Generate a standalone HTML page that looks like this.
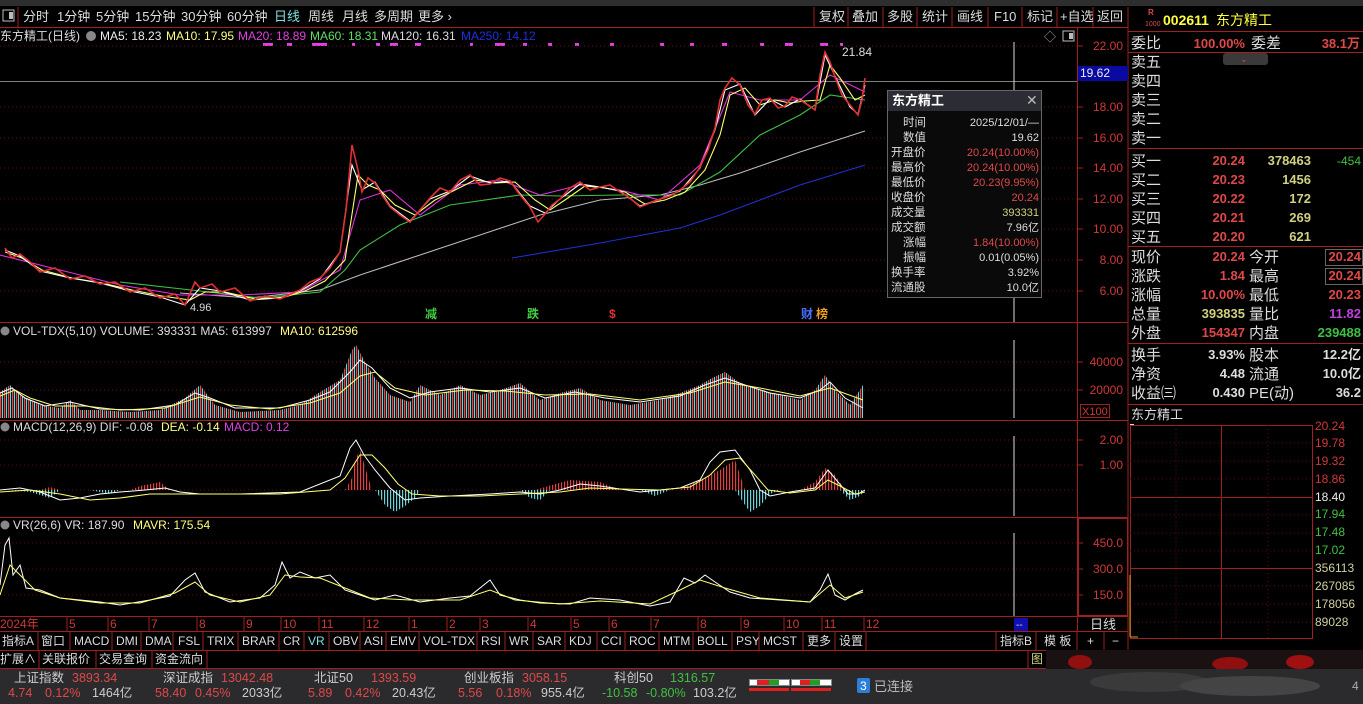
<!DOCTYPE html>
<html><head><meta charset="utf-8"><style>
html,body{margin:0;padding:0;background:#000;width:1363px;height:704px;overflow:hidden}
svg{display:block}
text{font-family:"Liberation Sans","Noto Sans CJK SC",sans-serif}
</style></head><body>
<svg width="1363" height="704" viewBox="0 0 1363 704" xmlns="http://www.w3.org/2000/svg">
<defs>
<pattern id="vb" width="4" height="10" patternUnits="userSpaceOnUse"><rect x="0" y="0" width="1.3" height="10" fill="#e04848"/><rect x="2" y="0" width="1.1" height="10" fill="#6cd2d8"/></pattern>
<pattern id="mr" width="3" height="10" patternUnits="userSpaceOnUse"><rect x="0" y="0" width="1.2" height="10" fill="#e04040"/></pattern>
<pattern id="mc" width="3" height="10" patternUnits="userSpaceOnUse"><rect x="0" y="0" width="1.2" height="10" fill="#6cd2d8"/></pattern>
</defs>
<rect width="1363" height="704" fill="#000"/>
<rect x="0" y="0" width="1363" height="6" fill="#2e2e2e"/>
<g font-size="13" fill="#ddd">
<rect x="3" y="10" width="11" height="11" fill="none" stroke="#bbb"/><rect x="9" y="12" width="4" height="7" fill="#bbb"/>
<line x1="18" y1="7" x2="18" y2="27" stroke="#a02020"/>
<text x="23" y="21">分时</text><text x="57" y="21">1分钟</text><text x="96" y="21">5分钟</text><text x="135" y="21">15分钟</text><text x="181" y="21">30分钟</text><text x="227" y="21">60分钟</text>
<text x="274" y="21" fill="#7fe0e0">日线</text><text x="308" y="21">周线</text><text x="342" y="21">月线</text><text x="374" y="21">多周期</text><text x="418" y="21">更多 ›</text>
<g stroke="#a02020"><line x1="814" y1="7" x2="814" y2="27"/><line x1="848" y1="7" x2="848" y2="27"/><line x1="883" y1="7" x2="883" y2="27"/><line x1="917" y1="7" x2="917" y2="27"/><line x1="952" y1="7" x2="952" y2="27"/><line x1="988" y1="7" x2="988" y2="27"/><line x1="1022" y1="7" x2="1022" y2="27"/><line x1="1057" y1="7" x2="1057" y2="27"/><line x1="1093" y1="7" x2="1093" y2="27"/><line x1="1128" y1="7" x2="1128" y2="704"/></g>
<text x="819" y="21">复权</text><text x="852" y="21">叠加</text><text x="887" y="21">多股</text><text x="922" y="21">统计</text><text x="957" y="21">画线</text><text x="994" y="21">F10</text><text x="1027" y="21">标记</text><text x="1060" y="21">+自选</text><text x="1097" y="21">返回</text>
</g>
<line x1="0" y1="27.5" x2="1128" y2="27.5" stroke="#a02020"/>
<g font-size="12">
<text x="0" y="40" fill="#ddd">东方精工(日线)</text>
<circle cx="91" cy="36" r="5" fill="#888"/>
<text x="100" y="40" fill="#eee">MA5: 18.23</text><text x="166" y="40" fill="#ffff80">MA10: 17.95</text><text x="238" y="40" fill="#e040e0">MA20: 18.89</text><text x="310" y="40" fill="#60e060">MA60: 18.31</text><text x="381" y="40" fill="#ddd">MA120: 16.31</text><text x="461" y="40" fill="#2030e0">MA250: 14.12</text>
</g>
<g fill="#e040e0"><rect x="263" y="43" width="10" height="3"/><rect x="287" y="43" width="5" height="3"/><rect x="312" y="43" width="15" height="3"/><rect x="352" y="43" width="3" height="3"/><rect x="376" y="43" width="4" height="3"/><rect x="390" y="43" width="8" height="3"/><rect x="415" y="43" width="6" height="3"/><rect x="470" y="43" width="3" height="3"/><rect x="495" y="43" width="10" height="3"/><rect x="523" y="43" width="4" height="3"/><rect x="548" y="43" width="4" height="3"/><rect x="575" y="43" width="4" height="3"/><rect x="610" y="43" width="4" height="3"/><rect x="660" y="43" width="4" height="3"/><rect x="690" y="43" width="4" height="3"/><rect x="722" y="43" width="5" height="3"/><rect x="760" y="43" width="4" height="3"/><rect x="785" y="43" width="8" height="3"/><rect x="820" y="43" width="8" height="3"/><rect x="840" y="43" width="3" height="3"/></g>
<text x="1044" y="41" font-size="12" fill="#aaa">◇</text>
<rect x="1063" y="31" width="11" height="10" fill="none" stroke="#bbb"/><rect x="1069" y="33" width="4" height="6" fill="#bbb"/>
<g stroke="#5a1010" stroke-dasharray="1,3">
<line x1="0" y1="46" x2="1077" y2="46"/><line x1="0" y1="107" x2="1077" y2="107"/><line x1="0" y1="138" x2="1077" y2="138"/><line x1="0" y1="168" x2="1077" y2="168"/><line x1="0" y1="199" x2="1077" y2="199"/><line x1="0" y1="229" x2="1077" y2="229"/><line x1="0" y1="260" x2="1077" y2="260"/><line x1="0" y1="291" x2="1077" y2="291"/>
<line x1="0" y1="362" x2="1077" y2="362"/><line x1="0" y1="390" x2="1077" y2="390"/>
<line x1="0" y1="440" x2="1077" y2="440"/><line x1="0" y1="465" x2="1077" y2="465"/><line x1="0" y1="490" x2="1077" y2="490"/>
<line x1="0" y1="543" x2="1077" y2="543"/><line x1="0" y1="569" x2="1077" y2="569"/><line x1="0" y1="595" x2="1077" y2="595"/>
</g>
<line x1="0" y1="81.5" x2="1077" y2="81.5" stroke="#aaa" stroke-width="0.8"/>
<line x1="1014" y1="42" x2="1014" y2="322" stroke="#ddd"/>
<line x1="1014" y1="340" x2="1014" y2="418" stroke="#ddd"/>
<line x1="1014" y1="436" x2="1014" y2="516" stroke="#ddd"/>
<line x1="1014" y1="533" x2="1014" y2="616" stroke="#ddd"/>
<g fill="none" stroke-width="1.1">
<polyline stroke="#2030d0" points="512,258 600,243 680,228 720,215 760,200 800,185 865,165"/>
<polyline stroke="#bbb" points="180,293 250,298 320,290 360,275 420,255 480,235 540,215 600,200 660,195 700,185 740,173 800,152 865,131"/>
<polyline stroke="#40c040" points="120,282 200,291 260,298 320,292 345,270 360,250 400,225 450,205 520,195 560,196 620,195 680,195 720,172 760,135 800,115 830,95 865,100"/>
<polyline stroke="#e030e0" points="0,255 60,270 120,285 180,295 240,295 300,292 340,270 360,200 390,190 420,215 460,185 500,180 540,195 580,185 620,190 660,200 700,165 730,92 760,100 800,100 830,75 865,92"/>
<polyline stroke="#ffff70" points="5,252 22,258 42,270 72,278 102,283 132,290 162,296 190,300 205,292 225,292 255,299 285,297 305,291 325,281 345,260 358,175 368,185 380,190 395,205 415,215 435,200 455,190 475,180 495,183 515,182 535,200 550,210 565,200 585,186 605,188 625,192 645,204 665,200 685,192 705,170 720,135 730,95 745,88 760,105 775,100 790,103 805,101 820,100 830,65 840,78 855,100 865,95"/>
<polyline stroke="#fff" points="5,250 20,256 40,271 70,278 100,283 130,291 160,297 185,305 200,288 220,291 250,300 280,298 300,291 320,279 340,252 352,165 362,190 375,182 390,206 410,221 430,199 450,191 470,176 490,183 510,181 530,206 545,213 560,199 580,184 600,187 620,191 640,206 660,199 680,191 700,168 715,130 725,90 740,84 755,115 770,99 785,107 800,99 815,110 825,55 835,76 850,107 858,114 865,85"/>
<polyline stroke="#e03030" stroke-width="1.6" points="5,248 12,258 20,254 30,262 40,272 55,268 70,279 85,276 100,284 115,282 130,292 145,288 160,298 175,294 185,305 195,282 200,288 212,284 220,292 235,288 250,301 265,296 280,299 295,292 300,290 310,282 320,278 330,268 340,252 346,210 352,145 358,170 362,192 368,178 375,183 382,195 390,207 400,215 410,222 420,210 430,198 440,188 450,192 460,180 470,175 480,185 490,184 500,178 510,181 520,195 530,207 538,222 545,214 552,205 560,199 570,188 580,182 590,190 600,187 610,185 620,192 630,198 640,207 650,203 660,199 670,196 680,190 690,182 700,167 708,150 715,128 720,100 725,88 732,78 740,85 748,105 755,114 762,100 770,98 778,108 785,106 792,97 800,100 808,105 815,110 820,75 825,52 830,62 835,77 842,95 850,105 858,115 862,100 865,78"/>
</g>
<text x="190" y="311" font-size="11" fill="#ddd">4.96</text>
<text x="842" y="56" font-size="12" fill="#ddd">21.84</text>
<g font-size="12" font-weight="bold"><text x="425" y="318" fill="#40d040">减</text><text x="527" y="318" fill="#40d040">跌</text><text x="609" y="318" fill="#e03030">$</text><text x="801" y="318" fill="#4a70ff">财</text><text x="816" y="318" fill="#f0a020">榜</text></g>
<rect x="887.5" y="90.5" width="154" height="207" fill="#0a0a0a" stroke="#666"/>
<rect x="888" y="91" width="153" height="20" fill="#2c2c34"/>
<text x="892" y="105" font-size="13" font-weight="bold" fill="#fff">东方精工</text>
<text x="1026" y="105" font-size="14" fill="#bbb">✕</text>
<g font-size="11.5" fill="#ddd">
<text x="903" y="126">时间</text><text x="903" y="141">数值</text><text x="891" y="156">开盘价</text><text x="891" y="171">最高价</text><text x="891" y="186">最低价</text><text x="891" y="201">收盘价</text><text x="891" y="216">成交量</text><text x="891" y="231">成交额</text><text x="903" y="246">涨幅</text><text x="903" y="261">振幅</text><text x="891" y="276">换手率</text><text x="891" y="291">流通股</text>
</g>
<g font-size="11" text-anchor="end" font-family="Liberation Mono,monospace">
<text x="1039" y="126" fill="#ddd">2025/12/01/—</text><text x="1039" y="141" fill="#ddd">19.62</text><text x="1039" y="156" fill="#e04848">20.24(10.00%)</text><text x="1039" y="171" fill="#e04848">20.24(10.00%)</text><text x="1039" y="186" fill="#e04848">20.23(9.95%)</text><text x="1039" y="201" fill="#e04848">20.24</text><text x="1039" y="216" fill="#d0d080">393331</text><text x="1039" y="231" fill="#ddd">7.96亿</text><text x="1039" y="246" fill="#e04848">1.84(10.00%)</text><text x="1039" y="261" fill="#ddd">0.01(0.05%)</text><text x="1039" y="276" fill="#ddd">3.92%</text><text x="1039" y="291" fill="#ddd">10.0亿</text>
</g>
<g stroke="#a02020"><line x1="0" y1="322.5" x2="1128" y2="322.5"/><line x1="0" y1="420.5" x2="1128" y2="420.5"/><line x1="0" y1="517.5" x2="1128" y2="517.5"/><line x1="0" y1="616.5" x2="1128" y2="616.5"/><line x1="1077.5" y1="28" x2="1077.5" y2="632"/></g>
<g font-size="12" fill="#d03838" text-anchor="end">
<text x="1123" y="50">22.00</text><text x="1123" y="111">18.00</text><text x="1123" y="142">16.00</text><text x="1123" y="172">14.00</text><text x="1123" y="203">12.00</text><text x="1123" y="233">10.00</text><text x="1123" y="264">8.00</text><text x="1123" y="295">6.00</text>
<text x="1123" y="366">40000</text><text x="1123" y="394">20000</text>
<text x="1123" y="444">2.00</text><text x="1123" y="469">1.00</text>
<text x="1123" y="547">450.0</text><text x="1123" y="573">300.0</text><text x="1123" y="599">150.0</text>
</g>
<g stroke="#a02020"><line x1="1077" y1="46" x2="1083" y2="46"/><line x1="1077" y1="107" x2="1083" y2="107"/><line x1="1077" y1="138" x2="1083" y2="138"/><line x1="1077" y1="168" x2="1083" y2="168"/><line x1="1077" y1="199" x2="1083" y2="199"/><line x1="1077" y1="229" x2="1083" y2="229"/><line x1="1077" y1="260" x2="1083" y2="260"/><line x1="1077" y1="291" x2="1083" y2="291"/><line x1="1077" y1="362" x2="1083" y2="362"/><line x1="1077" y1="390" x2="1083" y2="390"/><line x1="1077" y1="440" x2="1083" y2="440"/><line x1="1077" y1="465" x2="1083" y2="465"/><line x1="1077" y1="543" x2="1083" y2="543"/><line x1="1077" y1="569" x2="1083" y2="569"/><line x1="1077" y1="595" x2="1083" y2="595"/></g>
<rect x="1078" y="66" width="50" height="15" fill="#0a0aa0"/><text x="1080" y="77" font-size="12" fill="#eee">19.62</text>
<rect x="1080.5" y="404.5" width="29" height="13" fill="none" stroke="#a02020"/><text x="1082" y="415" font-size="11" fill="#d03838">X100</text>
<rect x="1078.5" y="518.5" width="49" height="97" fill="none" stroke="#a02020"/>
<g font-size="12"><circle cx="5" cy="331" r="4.5" fill="#888"/><text x="13" y="335" fill="#ddd">VOL-TDX(5,10) VOLUME: 393331  MA5: 613997</text><text x="280" y="335" fill="#ffff80">MA10: 612596</text></g>
<polygon fill="url(#vb)" points="0,418 0,392 10,385 20,395 40,405 60,408 70,400 80,410 100,410 130,412 160,410 185,398 200,385 215,405 240,412 280,410 300,405 320,392 340,380 352,350 356,345 365,362 375,378 390,395 410,402 420,385 440,395 460,385 480,395 500,390 520,383 540,400 560,393 580,388 600,400 630,405 660,400 680,393 700,385 712,378 725,372 740,383 760,390 780,395 800,400 815,390 825,375 835,390 850,405 863,385 863,418"/>
<g fill="none" stroke-width="1">
<polyline stroke="#fff" points="0,393 12,388 25,398 45,406 70,402 100,409 140,410 175,405 195,393 210,398 235,408 280,408 310,400 330,392 350,372 360,360 372,368 390,388 410,398 430,392 460,388 490,392 520,388 545,398 575,392 605,398 640,402 680,396 705,385 725,378 745,385 770,393 800,398 820,390 830,382 845,398 863,408"/>
<polyline stroke="#ffff70" points="0,396 15,390 30,398 55,406 85,406 120,410 165,408 200,397 230,405 270,409 310,403 340,393 360,376 375,372 395,388 425,395 465,390 505,391 545,395 590,394 640,400 690,393 725,382 760,388 800,396 830,388 863,400"/>
</g>
<g font-size="12"><circle cx="5" cy="427" r="4.5" fill="#888"/><text x="13" y="431" fill="#ddd">MACD(12,26,9)  DIF: -0.08</text><text x="161" y="431" fill="#ffff80">DEA: -0.14</text><text x="224" y="431" fill="#e040e0">MACD: 0.12</text></g>
<polygon fill="url(#mr)" points="40,490 50,487 60,490 130,490 140,486 160,482 170,490 230,490 345,490 352,478 355,460 360,450 366,470 372,490 535,490 555,484 570,480 600,482 620,490 680,490 700,480 720,470 735,460 745,490 800,490 815,482 825,468 835,475 845,490"/>
<polygon fill="url(#mc)" points="10,490 30,492 50,498 60,490 90,490 110,494 120,490 375,490 385,505 395,512 405,506 415,498 420,490 520,490 530,498 540,500 550,490 640,490 655,496 670,490 735,490 745,505 750,512 760,506 770,494 780,490 840,490 850,500 860,496 865,490"/>
<g fill="none">
<polyline stroke="#fff" points="0,490 20,488 40,492 60,500 80,498 100,494 120,492 145,490 165,488 180,492 200,494 240,494 300,492 340,476 350,448 356,440 364,455 375,470 390,488 405,500 420,498 450,496 490,494 520,492 540,494 560,490 580,484 600,486 640,492 680,488 700,480 710,462 720,452 735,450 750,470 760,490 770,496 790,492 815,488 828,470 838,482 848,494 858,494 865,490"/>
<polyline stroke="#ffff70" points="0,492 30,490 60,494 90,500 120,498 150,494 180,494 220,494 280,494 330,490 345,478 360,455 372,455 385,468 398,484 412,494 440,496 480,496 520,494 560,492 590,488 620,489 660,490 690,487 710,475 725,460 740,458 755,475 768,490 790,493 815,490 828,480 840,486 855,494 865,492"/>
</g>
<g font-size="12"><circle cx="5" cy="525" r="4.5" fill="#888"/><text x="13" y="529" fill="#ddd">VR(26,6)  VR: 187.90</text><text x="133" y="529" fill="#ffff80">MAVR: 175.54</text></g>
<g fill="none">
<polyline stroke="#fff" points="0,585 5,545 9,538 13,575 20,565 26,588 40,590 60,598 80,600 100,602 120,605 150,600 170,596 185,580 195,573 205,592 230,602 260,598 275,585 282,562 290,578 300,572 315,578 330,575 345,590 360,595 375,600 395,595 420,602 450,598 470,596 490,580 500,595 520,600 540,603 570,604 590,598 620,600 650,606 670,602 684,578 695,583 705,575 715,582 730,592 750,598 780,600 810,602 820,590 828,574 835,595 845,600 855,594 863,590"/>
<polyline stroke="#ffff70" points="0,595 10,565 20,575 35,590 60,598 100,603 140,603 175,593 195,582 210,595 240,602 270,595 285,575 300,577 320,578 345,588 370,598 410,600 460,600 490,590 515,600 560,604 600,601 650,604 680,590 700,580 725,588 760,598 810,602 830,585 845,598 863,592"/>
</g>
<g font-size="12" fill="#d03838">
<text x="0" y="628">2024年</text>
<text x="69" y="628">5</text><text x="110" y="628">6</text><text x="151" y="628">7</text><text x="199" y="628">8</text><text x="246" y="628">9</text><text x="283" y="628">10</text><text x="321" y="628">11</text><text x="366" y="628">12</text><text x="411" y="628">1</text><text x="449" y="628">2</text><text x="482" y="628">3</text><text x="530" y="628">4</text><text x="573" y="628">5</text><text x="611" y="628">6</text><text x="653" y="628">7</text><text x="700" y="628">8</text><text x="743" y="628">9</text><text x="786" y="628">10</text><text x="824" y="628">11</text><text x="866" y="628">12</text>
</g>
<g stroke="#a02020"><line x1="67" y1="617" x2="67" y2="631"/><line x1="108" y1="617" x2="108" y2="631"/><line x1="149" y1="617" x2="149" y2="631"/><line x1="197" y1="617" x2="197" y2="631"/><line x1="244" y1="617" x2="244" y2="631"/><line x1="281" y1="617" x2="281" y2="631"/><line x1="319" y1="617" x2="319" y2="631"/><line x1="364" y1="617" x2="364" y2="631"/><line x1="409" y1="617" x2="409" y2="631"/><line x1="447" y1="617" x2="447" y2="631"/><line x1="480" y1="617" x2="480" y2="631"/><line x1="528" y1="617" x2="528" y2="631"/><line x1="571" y1="617" x2="571" y2="631"/><line x1="609" y1="617" x2="609" y2="631"/><line x1="651" y1="617" x2="651" y2="631"/><line x1="698" y1="617" x2="698" y2="631"/><line x1="741" y1="617" x2="741" y2="631"/><line x1="784" y1="617" x2="784" y2="631"/><line x1="822" y1="617" x2="822" y2="631"/><line x1="864" y1="617" x2="864" y2="631"/></g>
<rect x="1014" y="618" width="14" height="13" fill="#1010b0"/><text x="1016" y="628" font-size="10" fill="#ddd">--</text>
<text x="1090" y="629" font-size="13" fill="#ddd">日线</text>
<line x1="0" y1="631.5" x2="1128" y2="631.5" stroke="#a02020"/>
<line x1="0" y1="650.5" x2="1128" y2="650.5" stroke="#a02020"/>
<line x1="0" y1="668.5" x2="1128" y2="668.5" stroke="#a02020"/>
<g font-size="12" fill="#ddd">
<text x="2" y="645">指标A</text><text x="41" y="645">窗口</text><text x="74" y="645">MACD</text><text x="116" y="645">DMI</text><text x="145" y="645">DMA</text><text x="178" y="645">FSL</text><text x="207" y="645">TRIX</text><text x="242" y="645">BRAR</text><text x="283" y="645">CR</text><text x="308" y="645" fill="#7fe0e0">VR</text><text x="333" y="645">OBV</text><text x="364" y="645">ASI</text><text x="390" y="645">EMV</text><text x="423" y="645">VOL-TDX</text><text x="481" y="645">RSI</text><text x="509" y="645">WR</text><text x="537" y="645">SAR</text><text x="569" y="645">KDJ</text><text x="601" y="645">CCI</text><text x="629" y="645">ROC</text><text x="663" y="645">MTM</text><text x="697" y="645">BOLL</text><text x="736" y="645">PSY</text><text x="763" y="645">MCST</text><text x="807" y="645">更多</text><text x="839" y="645">设置</text>
<text x="1000" y="645">指标B</text><text x="1044" y="645">模 板</text><text x="1087" y="645">+</text><text x="1112" y="645">−</text>
<text x="0" y="663">扩展∧</text><text x="42" y="663">关联报价</text><text x="99" y="663">交易查询</text><text x="155" y="663">资金流向</text>
</g>
<g stroke="#a02020"><line x1="38" y1="631" x2="38" y2="650"/><line x1="70" y1="631" x2="70" y2="650"/><line x1="112" y1="631" x2="112" y2="650"/><line x1="141" y1="631" x2="141" y2="650"/><line x1="173" y1="631" x2="173" y2="650"/><line x1="203" y1="631" x2="203" y2="650"/><line x1="238" y1="631" x2="238" y2="650"/><line x1="279" y1="631" x2="279" y2="650"/><line x1="304" y1="631" x2="304" y2="650"/><line x1="329" y1="631" x2="329" y2="650"/><line x1="360" y1="631" x2="360" y2="650"/><line x1="386" y1="631" x2="386" y2="650"/><line x1="419" y1="631" x2="419" y2="650"/><line x1="477" y1="631" x2="477" y2="650"/><line x1="505" y1="631" x2="505" y2="650"/><line x1="533" y1="631" x2="533" y2="650"/><line x1="565" y1="631" x2="565" y2="650"/><line x1="597" y1="631" x2="597" y2="650"/><line x1="625" y1="631" x2="625" y2="650"/><line x1="659" y1="631" x2="659" y2="650"/><line x1="693" y1="631" x2="693" y2="650"/><line x1="732" y1="631" x2="732" y2="650"/><line x1="759" y1="631" x2="759" y2="650"/><line x1="803" y1="631" x2="803" y2="650"/><line x1="835" y1="631" x2="835" y2="650"/><line x1="866" y1="631" x2="866" y2="650"/><line x1="996" y1="631" x2="996" y2="650"/><line x1="1036" y1="631" x2="1036" y2="650"/><line x1="1077" y1="631" x2="1077" y2="650"/><line x1="1104" y1="631" x2="1104" y2="650"/>
<line x1="39" y1="650" x2="39" y2="668"/><line x1="96" y1="650" x2="96" y2="668"/><line x1="152" y1="650" x2="152" y2="668"/><line x1="207" y1="650" x2="207" y2="668"/><line x1="1028" y1="650" x2="1028" y2="668"/></g>
<text x="1031" y="663" font-size="12" fill="#d0d080">图</text>
<rect x="1046" y="650" width="317" height="20" fill="#1a1212"/>
<ellipse cx="1080" cy="662" rx="12" ry="7" fill="#901010"/><ellipse cx="1230" cy="664" rx="18" ry="7" fill="#901010"/><ellipse cx="1300" cy="662" rx="14" ry="7" fill="#a01010"/>
<rect x="0" y="669" width="1363" height="35" fill="#2b2b2d"/>
<g font-size="12.5">
<text x="14" y="682" fill="#ccc">上证指数</text><text x="72" y="682" fill="#e04848">3893.34</text><text x="8" y="697" fill="#e04848">4.74</text><text x="45" y="697" fill="#e04848">0.12%</text><text x="92" y="697" fill="#ccc">1464亿</text>
<text x="163" y="682" fill="#ccc">深证成指</text><text x="221" y="682" fill="#e04848">13042.48</text><text x="155" y="697" fill="#e04848">58.40</text><text x="195" y="697" fill="#e04848">0.45%</text><text x="242" y="697" fill="#ccc">2033亿</text>
<text x="314" y="682" fill="#ccc">北证50</text><text x="371" y="682" fill="#e04848">1393.59</text><text x="308" y="697" fill="#e04848">5.89</text><text x="345" y="697" fill="#e04848">0.42%</text><text x="392" y="697" fill="#ccc">20.43亿</text>
<text x="464" y="682" fill="#ccc">创业板指</text><text x="522" y="682" fill="#e04848">3058.15</text><text x="458" y="697" fill="#e04848">5.56</text><text x="496" y="697" fill="#e04848">0.18%</text><text x="541" y="697" fill="#ccc">955.4亿</text>
<text x="614" y="682" fill="#ccc">科创50</text><text x="670" y="682" fill="#40c040">1316.57</text><text x="602" y="697" fill="#40c040">-10.58</text><text x="646" y="697" fill="#40c040">-0.80%</text><text x="693" y="697" fill="#ccc">103.2亿</text>
</g>
<g><rect x="749.5" y="679.5" width="40" height="6" fill="#fff" stroke="#888"/><rect x="757" y="680" width="12" height="5" fill="#e02020"/><rect x="769" y="680" width="10" height="5" fill="#20a020"/><rect x="749" y="688" width="40" height="3" fill="#e02020"/>
<rect x="791.5" y="679.5" width="40" height="6" fill="#fff" stroke="#888"/><rect x="800" y="680" width="10" height="5" fill="#e02020"/><rect x="810" y="680" width="10" height="5" fill="#20a020"/><rect x="791" y="688" width="40" height="3" fill="#e02020"/></g>
<rect x="857" y="678" width="13" height="15" rx="2" fill="#2a80d8"/><text x="860" y="690" font-size="12" fill="#fff">3</text><text x="874" y="691" font-size="13" fill="#bbb">已连接</text>
<ellipse cx="1150" cy="682" rx="60" ry="10" fill="#3a3a3a"/><ellipse cx="1250" cy="686" rx="70" ry="10" fill="#444"/>
<text x="1352" y="690" font-size="12" fill="#aaa">4</text>
<line x1="1128" y1="31.5" x2="1363" y2="31.5" stroke="#a02020"/>
<text x="1148" y="15" font-size="8" fill="#e04848" font-weight="bold">R</text><text x="1145" y="26" font-size="7" fill="#e04848">1000</text>
<text x="1163" y="25" font-size="14" font-weight="bold" fill="#ffff40">002611</text><text x="1216" y="25" font-size="14" fill="#ffff40">东方精工</text>
<g font-size="15" fill="#ddd"><text x="1131" y="48">委比</text><text x="1251" y="48">委差</text></g>
<text x="1245" y="48" font-size="13" font-weight="bold" fill="#e04848" text-anchor="end">100.00%</text><text x="1360" y="48" font-size="13" font-weight="bold" fill="#e04848" text-anchor="end">38.1万</text>
<line x1="1128" y1="52.5" x2="1363" y2="52.5" stroke="#a02020"/>
<rect x="1223" y="53" width="45" height="12" rx="3" fill="#3a3a3a"/><text x="1240" y="62" font-size="9" fill="#e04848">⌄</text>
<g font-size="15" fill="#ddd"><text x="1131" y="67">卖五</text><text x="1131" y="86">卖四</text><text x="1131" y="105">卖三</text><text x="1131" y="124">卖二</text><text x="1131" y="143">卖一</text></g>
<line x1="1128" y1="148.5" x2="1363" y2="148.5" stroke="#a02020"/>
<g font-size="15" fill="#ddd"><text x="1131" y="166">买一</text><text x="1131" y="185">买二</text><text x="1131" y="204">买三</text><text x="1131" y="223">买四</text><text x="1131" y="242">买五</text></g>
<g font-size="13" font-weight="bold" text-anchor="end">
<text x="1245" y="165" fill="#e04848">20.24</text><text x="1245" y="184" fill="#e04848">20.23</text><text x="1245" y="203" fill="#e04848">20.22</text><text x="1245" y="222" fill="#e04848">20.21</text><text x="1245" y="241" fill="#e04848">20.20</text>
<text x="1311" y="165" fill="#d0d080">378463</text><text x="1311" y="184" fill="#d0d080">1456</text><text x="1311" y="203" fill="#d0d080">172</text><text x="1311" y="222" fill="#d0d080">269</text><text x="1311" y="241" fill="#d0d080">621</text>
<text x="1361" y="165" fill="#40c040" font-weight="normal" font-size="12">-454</text>
</g>
<line x1="1128" y1="246.5" x2="1363" y2="246.5" stroke="#a02020"/>
<g font-size="15" fill="#ddd"><text x="1131" y="262">现价</text><text x="1131" y="281">涨跌</text><text x="1131" y="300">涨幅</text><text x="1131" y="319">总量</text><text x="1131" y="338">外盘</text>
<text x="1249" y="262">今开</text><text x="1249" y="281">最高</text><text x="1249" y="300">最低</text><text x="1249" y="319">量比</text><text x="1249" y="338">内盘</text></g>
<rect x="1325.5" y="249.5" width="37" height="16" fill="none" stroke="#666"/><rect x="1325.5" y="268.5" width="37" height="16" fill="none" stroke="#666"/>
<g font-size="13" font-weight="bold" text-anchor="end">
<text x="1245" y="261" fill="#e04848">20.24</text><text x="1245" y="280" fill="#e04848">1.84</text><text x="1245" y="299" fill="#e04848">10.00%</text><text x="1245" y="318" fill="#d0d080">393835</text><text x="1245" y="337" fill="#e04848">154347</text>
<text x="1361" y="261" fill="#e04848">20.24</text><text x="1361" y="280" fill="#e04848">20.24</text><text x="1361" y="299" fill="#e04848">20.23</text><text x="1361" y="318" fill="#c040e0">11.82</text><text x="1361" y="337" fill="#40c040">239488</text>
</g>
<line x1="1128" y1="343.5" x2="1363" y2="343.5" stroke="#a02020"/>
<g font-size="15" fill="#ddd"><text x="1131" y="360">换手</text><text x="1131" y="379">净资</text><text x="1131" y="398">收益㈢</text><text x="1249" y="360">股本</text><text x="1249" y="379">流通</text><text x="1249" y="398">PE(动)</text></g>
<g font-size="13" font-weight="bold" text-anchor="end" fill="#ddd">
<text x="1245" y="359">3.93%</text><text x="1245" y="378">4.48</text><text x="1245" y="397">0.430</text><text x="1361" y="359">12.2亿</text><text x="1361" y="378">10.0亿</text><text x="1361" y="397">36.2</text>
</g>
<line x1="1128" y1="404.5" x2="1363" y2="404.5" stroke="#a02020"/>
<text x="1131" y="419" font-size="13" fill="#ddd">东方精工</text>
<rect x="1130" y="424" width="4" height="1.5" fill="#ddd"/>
<rect x="1130.5" y="425.5" width="182" height="213" fill="none" stroke="#a02020"/>
<g stroke="#a02020"><line x1="1130" y1="497.5" x2="1312" y2="497.5"/><line x1="1130" y1="568.5" x2="1312" y2="568.5"/><line x1="1221.5" y1="425" x2="1221.5" y2="639"/></g>
<g stroke="#5a1010" stroke-dasharray="1,3"><line x1="1130" y1="443" x2="1312" y2="443"/><line x1="1130" y1="461" x2="1312" y2="461"/><line x1="1130" y1="479" x2="1312" y2="479"/><line x1="1130" y1="515" x2="1312" y2="515"/><line x1="1130" y1="533" x2="1312" y2="533"/><line x1="1130" y1="551" x2="1312" y2="551"/><line x1="1130" y1="586" x2="1312" y2="586"/><line x1="1130" y1="604" x2="1312" y2="604"/><line x1="1130" y1="622" x2="1312" y2="622"/><line x1="1176" y1="425" x2="1176" y2="639"/><line x1="1268" y1="425" x2="1268" y2="639"/></g>
<line x1="1130" y1="575" x2="1130" y2="637" stroke="#d0a020"/><line x1="1130" y1="637" x2="1138" y2="637" stroke="#d0a020"/>
<g font-size="12" fill="#d03838"><text x="1315" y="430">20.24</text><text x="1315" y="447">19.78</text><text x="1315" y="465">19.32</text><text x="1315" y="483">18.86</text></g>
<text x="1315" y="501" font-size="12" fill="#eee">18.40</text>
<g font-size="12" fill="#40c040"><text x="1315" y="518">17.94</text><text x="1315" y="536">17.48</text><text x="1315" y="554">17.02</text></g>
<g font-size="12" fill="#d0d0a0"><text x="1315" y="572">356113</text><text x="1315" y="590">267085</text><text x="1315" y="608">178056</text><text x="1315" y="626">89028</text></g>
</svg>
</body></html>
